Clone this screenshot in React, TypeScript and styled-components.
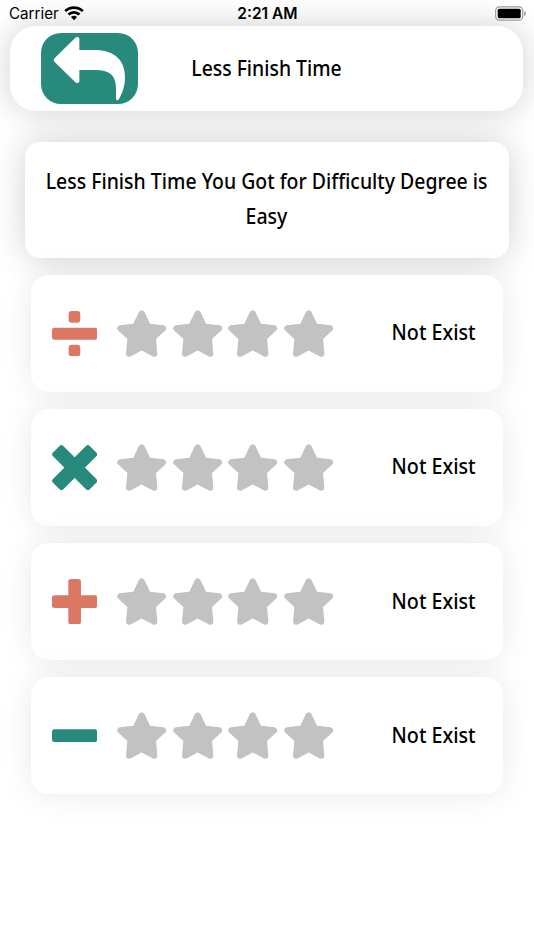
import React from "react";
import styled, { createGlobalStyle } from "styled-components";

const TEAL = "#288a7c";
const CORAL = "#dc7763";

const GlobalStyle = createGlobalStyle`
  * { box-sizing: border-box; }
  body { margin: 0; background: #fff; overflow: hidden; }
`;

const Screen = styled.main`
  width: 534px;
  height: 950px;
  overflow: hidden;
  display: flex;
  flex-direction: column;
  background: #fff;
  color: #000;
  font-family: "Noto Sans", "Open Sans", sans-serif;
  font-size: 21px;
  font-weight: 500;
`;

const StatusBar = styled.div`
  position: relative;
  z-index: 1;
  height: 26px;
  flex: none;
  padding: 1px 8px 0 9px;
  display: grid;
  grid-template-columns: 1fr auto 1fr;
  align-items: center;
  font: 400 15.2px/25px Inter, sans-serif;
`;

const Carrier = styled.div`
  display: flex;
  align-items: center;
  gap: 5px;
  svg { margin-top: -1px; }
`;

const Clock = styled.div`
  font-weight: 600;
  font-size: 15.5px;
`;

const BatteryIcon = styled.svg`
  justify-self: end;
  margin-top: -1px;
`;

const Header = styled.header`
  flex: none;
  height: 85px;
  margin: 0 10.7px 0 10.3px;
  border-radius: 26px;
  background: #fff;
  box-shadow: 0 0 34px rgba(0, 0, 0, 0.19);
  display: grid;
  grid-template-columns: 1fr auto 1fr;
  align-items: center;
  padding: 0 31px;
`;

const BackButton = styled.button`
  width: 97px;
  height: 71.5px;
  padding: 0;
  border: 0;
  border-radius: 20px;
  background: ${TEAL};
  display: block;
  svg { display: block; width: 97px; height: 71.5px; }
`;

const Label = styled.span<{ $stretch: number; $origin?: string }>`
  display: inline-block;
  white-space: nowrap;
  padding-bottom: 2px;
  transform: scaleX(${(p) => p.$stretch});
  transform-origin: ${(p) => p.$origin ?? "center"};
`;

const Summary = styled.section`
  flex: none;
  height: 116px;
  margin: 31px 25px 0;
  border-radius: 15px;
  background: #fff;
  box-shadow: 0 0 34px rgba(0, 0, 0, 0.19);
  display: flex;
  flex-direction: column;
  align-items: center;
  padding-top: 23px;
  line-height: 33px;
`;

const Rows = styled.div`
  margin: 16.7px 31px 0;
  display: flex;
  flex-direction: column;
  gap: 17px;
`;

const Row = styled.article`
  height: 117.2px;
  border-radius: 18px;
  background: #fff;
  box-shadow: 0 0 32px rgba(0, 0, 0, 0.09);
  display: flex;
  align-items: center;
  padding: 0 27px 0 20.7px;
`;

const OperationIcon = styled.svg`
  width: 45.3px;
  height: 45.3px;
  flex: none;
`;

const Stars = styled.div`
  display: flex;
  gap: 6px;
  margin: 0 auto 0 20.4px;
`;

const StarIcon = styled.svg`
  width: 49.4px;
  height: 47.4px;
  fill: #c2c2c2;
`;

const Star = () => (
  <StarIcon viewBox="0 0 148 142">
    <path d="M66 5Q74-4 82 5L99 41L140 46Q151 50 146 60L117 87L121 132Q120 142 109 140L74 121L39 140Q28 142 27 132L31 87L2 60Q-3 50 8 46L49 41Z" />
  </StarIcon>
);

type Operation = "divide" | "multiply" | "add" | "subtract";

const shapes: Record<Operation, React.ReactNode> = {
  divide: (
    <g fill={CORAL}>
      <rect x="50" y="0" width="35" height="35" rx="9" />
      <rect x="0" y="50" width="136" height="36" rx="8" />
      <rect x="50" y="101" width="35" height="35" rx="9" />
    </g>
  ),
  multiply: (
    <g fill={TEAL} transform="rotate(45 68 68)">
      <rect x="-10" y="46" width="156" height="44" rx="8" />
      <rect x="46" y="-10" width="44" height="156" rx="8" />
    </g>
  ),
  add: (
    <g fill={CORAL}>
      <rect x="0" y="49" width="136" height="38" rx="8" />
      <rect x="49" y="0" width="38" height="136" rx="8" />
    </g>
  ),
  subtract: <rect x="0" y="49" width="136" height="38" rx="8" fill={TEAL} />,
};

const operations: Operation[] = ["divide", "multiply", "add", "subtract"];

export default function App() {
  return (
    <Screen>
      <GlobalStyle />
      <StatusBar>
        <Carrier>
          Carrier
          <svg width="20" height="15" viewBox="0 0 20 15" fill="none" stroke="#000" strokeWidth="2.7">
            <path d="M1.2 5.1C6.1.4 13.9.4 18.8 5.1M4.5 8.5C7.6 5.6 12.4 5.6 15.5 8.5" />
            <path d="M6.9 11C8.7 9.4 11.3 9.4 13.1 11L10 14.2Z" fill="#000" stroke="none" />
          </svg>
        </Carrier>
        <Clock>2:21 AM</Clock>
        <BatteryIcon width="32" height="15" viewBox="0 0 32 15">
          <rect x="1.7" y=".8" width="27" height="13.4" rx="3.8" fill="#fff" stroke="#999" strokeWidth="1.2" />
          <rect x="3.7" y="2.8" width="23" height="9.4" rx="1.5" fill="#000" />
          <path d="M30.2 5Q32 5.8 32 7.5T30.2 10Z" fill="#999" />
        </BatteryIcon>
      </StatusBar>
      <Header>
        <BackButton aria-label="Back">
          <svg viewBox="0 0 291 214" fill="#fff">
            <path d="M40 76L103 14Q111 9 115 16V51H160C222 51 252 83 252 132C252 162 241 187 233 199Q228 205 225 198C226 151 230 112 165 111H115V145Q111 153 104 148L40 86Q36 81 40 76Z" />
          </svg>
        </BackButton>
        <Label $stretch={0.923}>Less Finish Time</Label>
      </Header>
      <Summary>
        <Label $stretch={0.926}>Less Finish Time You Got for Difficulty Degree is</Label>
        <Label $stretch={0.93}>Easy</Label>
      </Summary>
      <Rows>
        {operations.map((op) => (
          <Row key={op}>
            <OperationIcon viewBox="0 0 136 136">{shapes[op]}</OperationIcon>
            <Stars>
              <Star />
              <Star />
              <Star />
              <Star />
            </Stars>
            <Label $stretch={0.938} $origin="right">Not Exist</Label>
          </Row>
        ))}
      </Rows>
    </Screen>
  );
}
